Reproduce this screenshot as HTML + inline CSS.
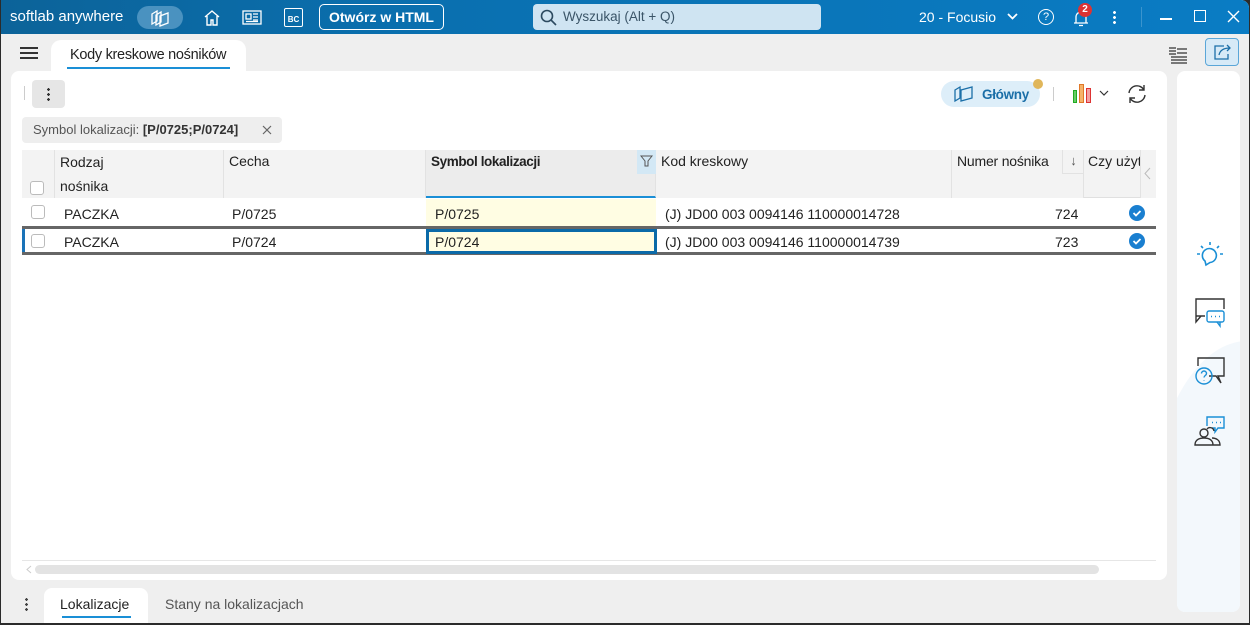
<!DOCTYPE html>
<html><head><meta charset="utf-8"><style>
*{box-sizing:border-box;margin:0;padding:0}
html,body{width:1250px;height:625px;overflow:hidden}
body{background:#2b2b2b;font-family:"Liberation Sans",sans-serif;font-size:14px;color:#222;position:relative}
.win{position:absolute;left:0;top:0;width:1249px;height:623px;background:#efefef;border-radius:0 8px 0 0;overflow:hidden;border-left:1px solid #2b2b2b}
.tb{position:absolute;left:0;top:0;width:100%;height:34px;background:linear-gradient(90deg,#0c6399 0%,#0a70b0 35%,#0a7cc4 100%);color:#fff}
.abs{position:absolute}
.cell{position:absolute;font-size:14px;white-space:nowrap}
.hdr{position:absolute;top:150px;height:48px;background:#f3f3f3;border-right:1px solid #e2e2e2}
.cb{position:absolute;width:14px;height:14px;border:1px solid #bbb;border-radius:3px;background:#fff}
.chk{position:absolute;width:16px;height:16px;border-radius:50%;background:#1a7fd0}
</style></head><body><div class="win">
<div class="tb">
 <div class="abs" style="left:9px;top:8px;font-size:15px">softlab anywhere</div>
 <div class="abs" style="left:136px;top:6px;width:46px;height:23px;border-radius:12px;background:#4a92c0"></div>
 <svg class="abs" style="left:149px;top:9px" width="22" height="18" viewBox="0 0 22 18" fill="none" stroke="#fff" stroke-width="1.3"><path d="M2 5l5-3v10l-5 3z M6 6l5-3v10l-5 3z M10 7l8-3v10l-8 3z"/></svg>
 <svg class="abs" style="left:202px;top:9px" width="18" height="17" viewBox="0 0 18 17" fill="none" stroke="#fff" stroke-width="1.4"><path d="M2 8L9 2l7 6M4 7v9h4v-5h2v5h4V7"/></svg>
 <svg class="abs" style="left:241px;top:10px" width="20" height="15" viewBox="0 0 20 15" fill="none" stroke="#fff" stroke-width="1.3"><rect x="1" y="1" width="18" height="13"/><rect x="4" y="4" width="5" height="5"/><path d="M11 4h5M11 7h5M11 10h5M4 11.5h12"/></svg>
 <div class="abs" style="left:283px;top:8px;width:19px;height:19px;border:1.3px solid #fff;border-radius:2px;font-size:8px;font-weight:bold;text-align:center;line-height:22px">BC</div>
 <div class="abs" style="left:318px;top:4px;width:125px;height:26px;border:1.3px solid #fff;border-radius:5px;font-size:14px;font-weight:bold;text-align:center;line-height:24px">Otwórz w HTML</div>
 <div class="abs" style="left:532px;top:4px;width:288px;height:26px;background:#cfe4f2;border-radius:4px;color:#3b5568;font-size:13.5px;line-height:26px;padding-left:30px">Wyszukaj (Alt + Q)</div>
 <svg class="abs" style="left:539px;top:9px" width="17" height="17" viewBox="0 0 17 17" fill="none" stroke="#2c4a60" stroke-width="1.6"><circle cx="7" cy="7" r="5.5"/><path d="M11 11l5 5"/></svg>
 <div class="abs" style="left:918px;top:9px;font-size:14px">20 - Focusio</div>
 <svg class="abs" style="left:1006px;top:13px" width="11" height="8"><path d="M1 1l4.5 4.5L10 1" stroke="#fff" stroke-width="1.8" fill="none"/></svg>
 <div class="abs" style="left:1037px;top:9px;width:16px;height:16px;border:1.3px solid #fff;border-radius:50%;font-size:11px;text-align:center;line-height:14px">?</div>
 <svg class="abs" style="left:1071px;top:9px" width="18" height="18" viewBox="0 0 18 18" fill="none" stroke="#fff" stroke-width="1.3"><path d="M4 14V8a5 5 0 0110 0v6zM2 14h14M7 16.5h4"/></svg>
 <div class="abs" style="left:1077px;top:3px;width:14px;height:14px;border-radius:50%;background:#d33;font-size:10px;font-weight:bold;text-align:center;line-height:14px">2</div>
 <div class="abs" style="left:1112px;top:10px;width:3px;height:14px;background:radial-gradient(circle,#fff 1.4px,transparent 1.5px) 0 0/3px 5px"></div>
 <div class="abs" style="left:1140px;top:7px;width:1px;height:20px;background:#3b94ce"></div>
 <div class="abs" style="left:1159px;top:18px;width:12px;height:1.5px;background:#fff"></div>
 <div class="abs" style="left:1193px;top:10px;width:12px;height:12px;border:1.4px solid #fff"></div>
 <svg class="abs" style="left:1226px;top:10px" width="13" height="13"><path d="M1 1l11 11M12 1L1 12" stroke="#fff" stroke-width="1.4"/></svg>
</div>
<div class="abs" style="left:19px;top:47px;width:18px;height:2px;background:#333;box-shadow:0 5px 0 #333,0 10px 0 #333"></div>
<div class="abs" style="left:50px;top:40px;width:195px;height:34px;background:#fff;border-radius:10px 10px 0 0"></div>
<div class="abs" style="left:69px;top:47px;font-size:14.5px;letter-spacing:-0.3px">Kody kreskowe nośników</div>
<div class="abs" style="left:66px;top:67px;width:163px;height:2px;background:#1a8fd6"></div>
<svg class="abs" style="left:1167px;top:46px" width="20" height="18" viewBox="0 0 20 18" fill="none" stroke="#333" stroke-width="1.2"><path d="M1 2h7M1 5h7M1 8h7M9 3h10M9 7h10M3 11h16M3 14h16M3 17h16"/></svg>
<div class="abs" style="left:1204px;top:38px;width:34px;height:28px;border:1px solid #5aa6d8;border-radius:4px;background:#d7eaf7"></div>
<svg class="abs" style="left:1212px;top:43px" width="19" height="18" viewBox="0 0 19 18" fill="none" stroke="#1b6fa8" stroke-width="1.3"><path d="M11 3H2v13h13v-5"/><path d="M6 12c1-5 5-7 11-7M14 2l3 3-3 3"/></svg>
<div class="abs" style="left:10px;top:71px;width:1156px;height:509px;background:#fff;border-radius:8px"></div>
<div class="abs" style="left:23px;top:86px;width:1px;height:14px;background:#ccc"></div>
<div class="abs" style="left:31px;top:80px;width:33px;height:28px;background:#e6e6e6;border-radius:4px"></div>
<div class="abs" style="left:46px;top:87px;width:3px;height:14px;background:radial-gradient(circle,#333 1.3px,transparent 1.4px) 0 0/3px 5px"></div>
<div class="abs" style="left:940px;top:81px;width:99px;height:26px;background:#ddeef9;border-radius:13px"></div>
<svg class="abs" style="left:952px;top:85px" width="22" height="19" viewBox="0 0 22 19" fill="none" stroke="#1b6fa8" stroke-width="1.3"><path d="M2 5l5-3v11l-5 3z M8 5l11-3v11L8 16z"/></svg>
<div class="abs" style="left:981px;top:87px;font-size:13.5px;font-weight:bold;color:#1b6fa8;letter-spacing:-0.3px">Główny</div>
<div class="abs" style="left:1032px;top:79px;width:10px;height:10px;border-radius:50%;background:#e0b65a"></div>
<div class="abs" style="left:1052px;top:87px;width:1px;height:14px;background:#ccc"></div>
<div class="abs" style="left:1072px;top:90px;width:4px;height:13px;background:#6c6;border:1px solid #2a2"></div>
<div class="abs" style="left:1078px;top:84px;width:5px;height:19px;background:#f5b36a;border:1px solid #e07828"></div>
<div class="abs" style="left:1085px;top:88px;width:5px;height:15px;background:#f3a0a0;border:1px solid #d33"></div>
<svg class="abs" style="left:1098px;top:90px" width="10" height="6"><path d="M1 1l4 4 4-4" stroke="#333" fill="none" stroke-width="1.2"/></svg>
<svg class="abs" style="left:1125px;top:83px" width="22" height="22" viewBox="0 0 22 22" fill="none" stroke="#333" stroke-width="1.4"><path d="M3 10a8 8 0 0115-3M19 12a8 8 0 01-15 3M18 2v5h-5M4 20v-5h5"/></svg>
<div class="abs" style="left:21px;top:117px;width:260px;height:26px;background:#eeeeee;border-radius:4px;font-size:13px;color:#555;line-height:26px;padding-left:11px">Symbol lokalizacji: <b style="color:#333">[P/0725;P/0724]</b></div>
<svg class="abs" style="left:261px;top:125px" width="10" height="10"><path d="M1 1l8 8M9 1L1 9" stroke="#666" stroke-width="1.2"/></svg>
<div class="abs" style="left:21px;top:150px;width:1118px;height:48px;background:#f3f3f3;border-bottom:1px solid #e0e0e0"></div>
<div class="hdr" style="left:21px;width:33px"></div>
<div class="hdr" style="left:54px;width:169px"></div>
<div class="hdr" style="left:223px;width:202px"></div>
<div class="hdr" style="left:425px;width:230px;background:#ececec;border-bottom:2px solid #1a8fd6"></div>
<div class="hdr" style="left:655px;width:296px"></div>
<div class="hdr" style="left:951px;width:132px"></div>
<div class="abs" style="left:1061px;top:150px;width:22px;height:24px;border-left:1px solid #e2e2e2;border-bottom:1px solid #e2e2e2;font-size:13px;text-align:center;line-height:22px;color:#555">↓</div>
<div class="abs" style="left:636px;top:150px;width:19px;height:24px;background:#d3e8f5"></div>
<svg class="abs" style="left:639px;top:155px" width="13" height="12"><path d="M1 1h11L8 6v5H5V6z" stroke="#555" fill="none" stroke-width="1"/></svg>
<div class="cb" style="left:29px;top:181px"></div>
<div class="cell" style="left:59px;top:150px;line-height:24px">Rodzaj<br>nośnika</div>
<div class="cell" style="left:228px;top:153px">Cecha</div>
<div class="cell" style="left:430px;top:154px;font-weight:bold;font-size:13.5px;letter-spacing:-0.4px">Symbol lokalizacji</div>
<div class="cell" style="left:660px;top:153px">Kod kreskowy</div>
<div class="cell" style="left:956px;top:153px;letter-spacing:-0.2px">Numer nośnika</div>
<div class="cell" style="left:1087px;top:153px;width:52px;overflow:hidden">Czy użyty</div>
<div class="abs" style="left:1139px;top:150px;width:16px;height:48px;background:#f3f3f3;border-left:1px solid #e2e2e2"></div>
<svg class="abs" style="left:1143px;top:167px" width="7" height="13"><path d="M6 1L1 6.5 6 12" stroke="#bbb" fill="none"/></svg>
<div class="abs" style="left:425px;top:199px;width:230px;height:28px;background:#fffde3"></div>
<div class="abs" style="left:21px;top:226px;width:1134px;height:3px;background:#666"></div>
<div class="abs" style="left:21px;top:252px;width:1134px;height:3px;background:#666"></div>
<div class="abs" style="left:21px;top:229px;width:3px;height:23px;background:#1a73b8"></div>
<div class="abs" style="left:425px;top:229px;width:231px;height:25px;background:#fffde3;border:3px solid #0b6aa8"></div>
<div class="cb" style="left:30px;top:205px"></div>
<div class="cb" style="left:30px;top:234px"></div>
<div class="cell" style="left:63px;top:206px">PACZKA</div>
<div class="cell" style="left:231px;top:206px">P/0725</div>
<div class="cell" style="left:434px;top:206px">P/0725</div>
<div class="cell" style="left:664px;top:206px">(J) JD00 003 0094146 110000014728</div>
<div class="cell" style="left:1054px;top:206px">724</div>
<div class="chk" style="left:1128px;top:205px"></div>
<div class="cell" style="left:63px;top:234px">PACZKA</div>
<div class="cell" style="left:231px;top:234px">P/0724</div>
<div class="cell" style="left:434px;top:234px">P/0724</div>
<div class="cell" style="left:664px;top:234px">(J) JD00 003 0094146 110000014739</div>
<div class="cell" style="left:1054px;top:234px">723</div>
<div class="chk" style="left:1128px;top:233px"></div>
<svg class="abs" style="left:1131px;top:208px" width="10" height="10"><path d="M1.5 5l2.5 2.5L8.5 3" stroke="#fff" stroke-width="1.8" fill="none"/></svg>
<svg class="abs" style="left:1131px;top:236px" width="10" height="10"><path d="M1.5 5l2.5 2.5L8.5 3" stroke="#fff" stroke-width="1.8" fill="none"/></svg>
<div class="abs" style="left:21px;top:560px;width:1134px;height:1px;background:#e6e6e6"></div>
<svg class="abs" style="left:25px;top:565px" width="6" height="9"><path d="M5 1L1 4.5 5 8" stroke="#ccc" fill="none"/></svg>
<div class="abs" style="left:34px;top:565px;width:1064px;height:9px;background:#e3e3e3;border-radius:5px"></div>
<div class="abs" style="left:1176px;top:71px;width:63px;height:541px;background:#fff;border-radius:8px;overflow:hidden"><div style="position:absolute;left:-30px;top:270px;width:200px;height:400px;border-radius:50%;background:#f3f8fc"></div></div>
<svg class="abs" style="left:1194px;top:240px" width="30" height="30" viewBox="0 0 30 30" fill="none" stroke="#1a8fd6" stroke-width="1.6"><path d="M10 21a7 7 0 115 1.5L11 25z"/><path d="M15 2v3M6 6l2 2M24 6l-2 2M2 14h3M25 14h3"/></svg>
<svg class="abs" style="left:1192px;top:296px" width="34" height="34" viewBox="0 0 34 34" fill="none" stroke-width="1.4"><path d="M12 20H3V3h28v10M3 20v6l5-6" stroke="#333"/><rect x="14" y="15" width="17" height="11" rx="2" stroke="#1a8fd6"/><path d="M24 26l3 4v-4M18 20.5h1M22 20.5h1M26 20.5h1" stroke="#1a8fd6"/></svg>
<svg class="abs" style="left:1192px;top:356px" width="34" height="34" viewBox="0 0 34 34" fill="none" stroke-width="1.4"><path d="M5 10V2h26v18h-6l3 7-5-7h-7" stroke="#333"/><circle cx="11" cy="20" r="8" stroke="#1a8fd6"/><path d="M8.5 17.5a2.5 2.5 0 115 0c0 2-2.5 2-2.5 4M11 24v.5" stroke="#1a8fd6"/></svg>
<svg class="abs" style="left:1192px;top:414px" width="34" height="34" viewBox="0 0 34 34" fill="none" stroke-width="1.4"><path d="M14 12V3h17v11h-6l-3 4v-4h-3M19 8.5h1M23 8.5h1M27 8.5h1" stroke="#1a8fd6"/><circle cx="11" cy="19" r="4" stroke="#333"/><path d="M2 31c0-5 4-7 9-7s9 2 9 7zM14 15a4 4 0 017 2M19 24c4 0 8 2 8 7h-7" stroke="#333"/></svg>
<div class="abs" style="left:24px;top:597px;width:3px;height:14px;background:radial-gradient(circle,#444 1.3px,transparent 1.4px) 0 0/3px 5px"></div>
<div class="abs" style="left:43px;top:588px;width:104px;height:35px;background:#fff;border-radius:8px 8px 0 0"></div>
<div class="abs" style="left:59px;top:596px;font-size:14px;color:#222">Lokalizacje</div>
<div class="abs" style="left:61px;top:616px;width:69px;height:2px;background:#1a8fd6"></div>
<div class="abs" style="left:164px;top:596px;font-size:14px;color:#555">Stany na lokalizacjach</div>
</div></body></html>
